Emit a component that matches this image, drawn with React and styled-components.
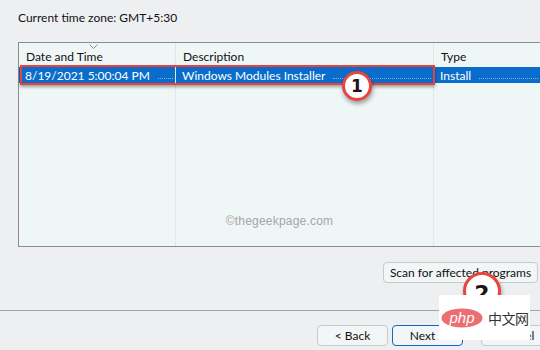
import React from 'react';
import styled, { createGlobalStyle } from 'styled-components';

const GlobalStyle = createGlobalStyle`
  html, body {
    margin: 0;
    padding: 0;
    background: #eeeff1;
  }
`;

const columns = [
  { key: 'date', title: 'Date and Time', width: '157px', value: '8/19/2021 5:00:04 PM' },
  { key: 'desc', title: 'Description', width: '258px', value: 'Windows Modules Installer' },
  { key: 'type', title: 'Type', width: '1fr', value: 'Install' },
];

const App = () => {
  return (
    <Page>
      <GlobalStyle />
      <Top>
        <ZoneLabel>Current time zone: GMT+5:30</ZoneLabel>
        <List>
          <ListGrid>
            {columns.map((col, i) => (
              <Column key={col.key} last={i === columns.length - 1}>
                <HeaderCell last={i === columns.length - 1}>
                  {i === 0 && (
                    <SortArrow viewBox="0 0 9 5">
                      <polyline points="0.5,0.5 4.5,4.5 8.5,0.5" fill="none" stroke="#8a8f94" strokeWidth="1" />
                    </SortArrow>
                  )}
                  {col.title}
                </HeaderCell>
                <Cell selected>
                  <CellText>{col.value}</CellText>
                  <FocusDots />
                </Cell>
              </Column>
            ))}
          </ListGrid>
          <Watermark>©thegeekpage.com</Watermark>
          <Highlight />
        </List>
        <ScanRow>
          <Button width="155px">Scan for affected programs</Button>
        </ScanRow>
      </Top>
      <Separator />
      <Footer>
        <Button width="71px">&lt; Back</Button>
        <Button width="71px" primary>Next &gt;</Button>
        <Button width="71px" gapLeft="14px">Cancel</Button>
      </Footer>
      <Marker size={30} x={342} y={71} fontSize={17}>1</Marker>
      <Marker size={38} x={463} y={272} fontSize={22} drop={4}>2</Marker>
      <PhpBadge>
        <svg width="42" height="20" viewBox="0 0 42 20">
          <ellipse cx="21" cy="10" rx="20.5" ry="9.5" fill="#ec6e72" />
          <text x="21" y="14.5" textAnchor="middle" fill="#fff" fontFamily="Liberation Sans, Arial, sans-serif" fontStyle="italic" fontSize="15">php</text>
        </svg>
        <PhpText>中文网</PhpText>
      </PhpBadge>
    </Page>
  );
};

const Page = styled.div`
  position: relative;
  width: 540px;
  height: 350px;
  overflow: hidden;
  background: #eeeff1;
  font-family: Lato, "Liberation Sans", sans-serif;
  font-size: 12px;
  color: #111;
  display: flex;
  flex-direction: column;
`;

const Top = styled.div`
  display: flex;
  flex-direction: column;
  padding: 8px 0 0 18px;
`;

const ZoneLabel = styled.div`
  height: 20px;
  line-height: 20px;
  margin-bottom: 14px;
`;

const List = styled.div`
  position: relative;
  height: 203px;
  background: #eff6f6;
  border: 1px solid #8b8d90;
  border-right: none;
`;

const ListGrid = styled.div`
  display: grid;
  grid-template-columns: ${columns.map((c) => c.width).join(' ')};
  height: 100%;
`;

const Column = styled.div`
  display: flex;
  flex-direction: column;
  border-right: ${(p) => (p.last ? 'none' : '1px dotted #d3dada')};
`;

const HeaderCell = styled.div`
  position: relative;
  height: 23px;
  line-height: 28px;
  padding-left: 7px;
  margin-right: ${(p) => (p.last ? '0' : '-1px')};
  border-right: ${(p) => (p.last ? 'none' : '1px solid #e1e7e7')};
  background: #eff6f6;
`;

const SortArrow = styled.svg`
  position: absolute;
  left: 70px;
  top: 1px;
  width: 9px;
  height: 5px;
`;

const Cell = styled.div`
  display: flex;
  align-items: center;
  height: 16px;
  margin-top: 1px;
  padding-left: 6px;
  padding-right: 2px;
  background: ${(p) => (p.selected ? '#0a6dcc' : 'transparent')};
  color: ${(p) => (p.selected ? '#fff' : '#111')};
`;

const CellText = styled.span`
  white-space: nowrap;
`;

const FocusDots = styled.span`
  flex: 1;
  margin: 6px 0 0 8px;
  border-bottom: 1px dotted rgba(180, 205, 235, 0.7);
`;

const Watermark = styled.div`
  position: absolute;
  left: 0;
  right: 0;
  bottom: 18px;
  text-align: center;
  color: #a4a6a8;
  font-family: "Liberation Sans", Arial, sans-serif;
  font-size: 12px;
  letter-spacing: 0.2px;
`;

const Highlight = styled.div`
  position: absolute;
  left: 1px;
  top: 22px;
  width: 411px;
  height: 16px;
  border: 2px solid #e9413b;
  box-shadow: 0 2px 3px rgba(0, 0, 0, 0.35);
`;

const ScanRow = styled.div`
  display: flex;
  justify-content: flex-end;
  padding: 15px 2px 0 0;
`;

const Button = styled.div`
  box-sizing: border-box;
  width: ${(p) => p.width};
  height: 21px;
  margin-left: ${(p) => p.gapLeft || '0'};
  flex-shrink: 0;
  display: flex;
  align-items: center;
  justify-content: center;
  background: #f2f6f6;
  border: 1px solid ${(p) => (p.primary ? '#1266c4' : '#c6cacd')};
  border-radius: 4px;
  color: #111;
  white-space: nowrap;
`;

const Separator = styled.div`
  height: 1px;
  margin-top: 27px;
  background: #a2a4a6;
`;

const Footer = styled.div`
  display: flex;
  gap: 4px;
  padding: 14px 0 0 317px;
`;

const Marker = styled.div.attrs((p) => ({
  style: {
    left: `${p.x}px`,
    top: `${p.y}px`,
    width: `${p.size}px`,
    height: `${p.size}px`,
    fontSize: `${p.fontSize}px`,
    paddingTop: `${p.drop || 0}px`,
  },
}))`
  position: absolute;
  box-sizing: border-box;
  border-radius: 50%;
  border: 3px solid #e8453f;
  background: #fff;
  box-shadow: 1px 3px 4px rgba(0, 0, 0, 0.35);
  display: flex;
  align-items: center;
  justify-content: center;
  font-family: "DejaVu Sans", sans-serif;
  font-weight: bold;
  color: #1c1218;
`;

const PhpBadge = styled.div`
  position: absolute;
  left: 439px;
  top: 295px;
  width: 91px;
  height: 45px;
  background: #fff;
  display: flex;
  align-items: center;
  gap: 5px;
  padding-left: 2px;
  box-sizing: border-box;
`;

const PhpText = styled.span`
  font-family: "Noto Sans CJK SC", sans-serif;
  font-size: 14px;
  color: #333;
  letter-spacing: -0.5px;
`;

export default App;
